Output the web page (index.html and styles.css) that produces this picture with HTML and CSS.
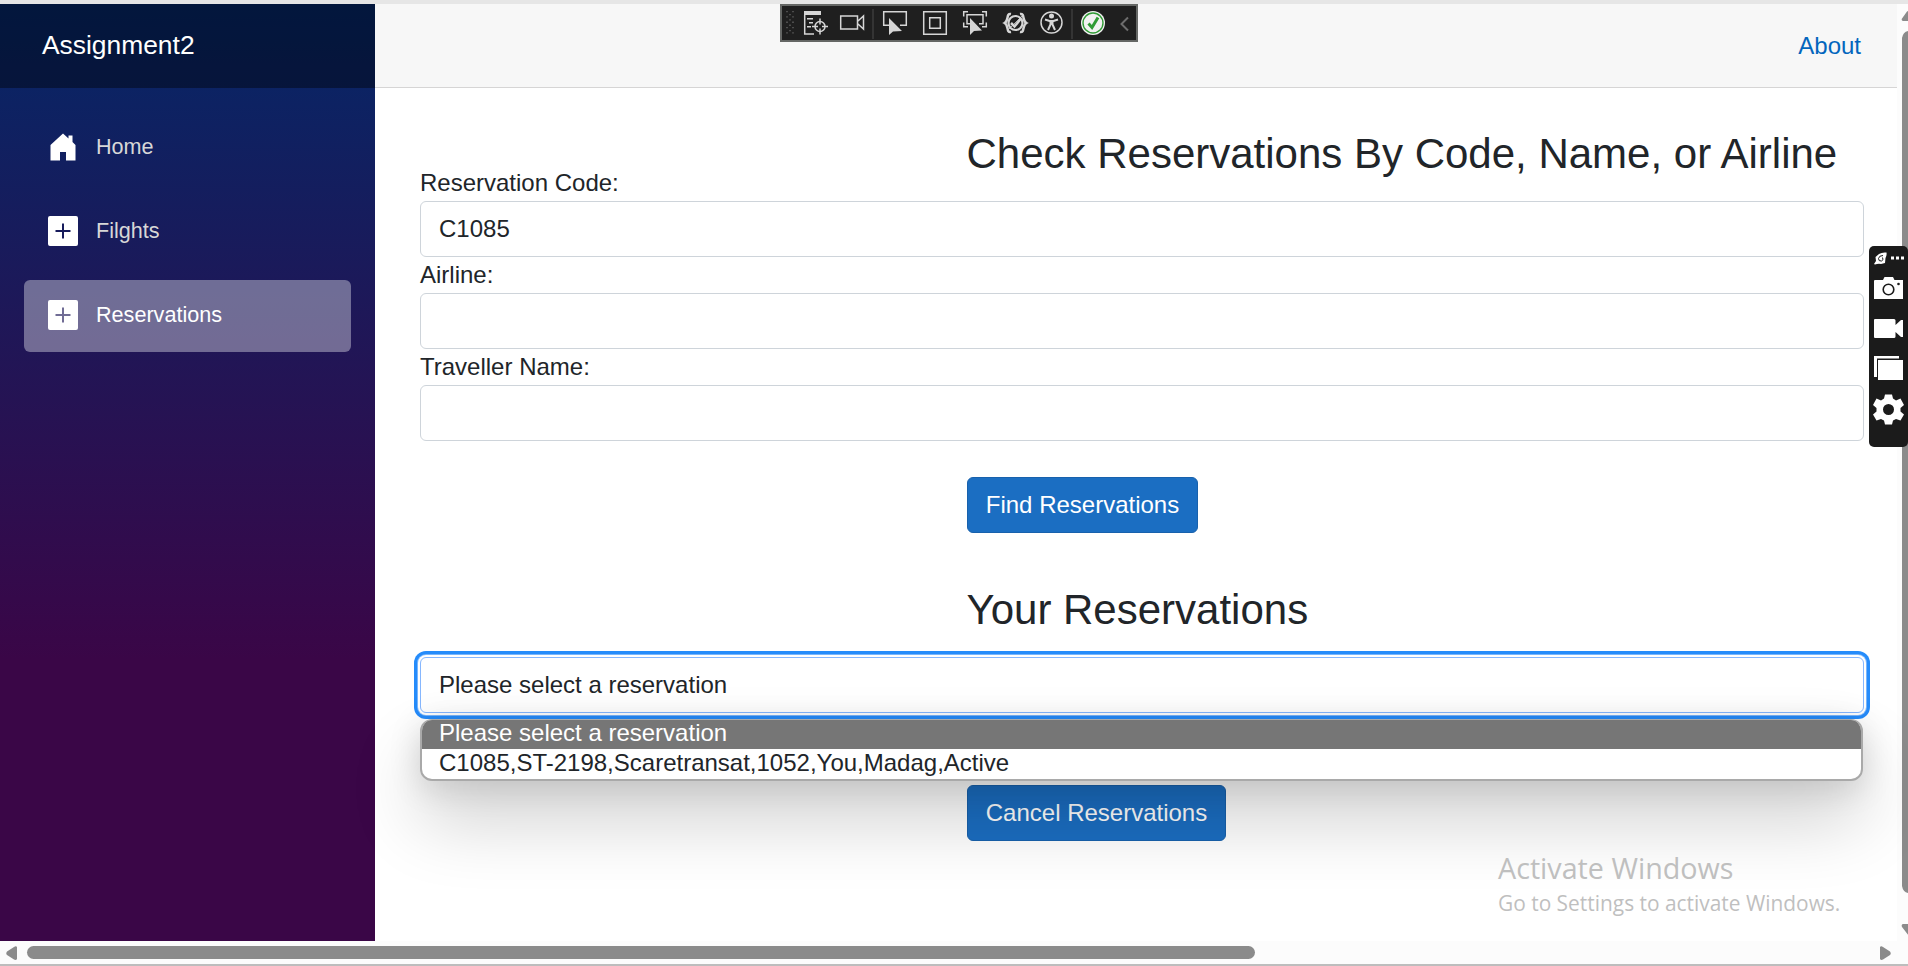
FILE: index.html
```html
<!DOCTYPE html>
<html lang="en">
<head>
<meta charset="utf-8">
<title>Assignment2</title>
<link rel="stylesheet" href="styles.css">
</head>
<body>
<div class="window-edge"></div>
<div class="viewport">
  <aside class="sidebar">
    <div class="brand">Assignment2</div>
    <nav class="nav">
      <a class="nav-link"><svg class="nav-icon" viewBox="0 0 30 30"><path d="M15 1.500 2.500 13V28.500H12V20H18V28.500H27.500V13L24.500 10V3.500H20.500V6.500z"/></svg>Home</a>
      <a class="nav-link"><svg class="nav-icon" viewBox="0 0 30 30"><path fill-rule="evenodd" d="M2 0H28Q30 0 30 2V28Q30 30 28 30H2Q0 30 0 28V2Q0 0 2 0zM14 7.500V14H7.500V16H14V22.500H16V16H22.500V14H16V7.500z"/></svg>Filghts</a>
      <a class="nav-link active"><svg class="nav-icon" viewBox="0 0 30 30"><path fill-rule="evenodd" d="M2 0H28Q30 0 30 2V28Q30 30 28 30H2Q0 30 0 28V2Q0 0 2 0zM14 7.500V14H7.500V16H14V22.500H16V16H22.500V14H16V7.500z"/></svg>Reservations</a>
    </nav>
  </aside>
  <main class="main">
    <header class="top-row"><a class="about">About</a></header>
    <article class="content">
      <h3 class="title">Check Reservations By Code, Name, or Airline</h3>
      <div class="form">
        <label class="label">Reservation Code:</label>
        <div class="control">C1085</div>
        <label class="label">Airline:</label>
        <div class="control"></div>
        <label class="label">Traveller Name:</label>
        <div class="control"></div>
      </div>
      <button class="btn find">Find Reservations</button>
      <h3 class="title second">Your Reservations</h3>
      <div class="select-wrap">
        <div class="control focused">Please select a reservation</div>
        <div class="options">
          <div class="option selected">Please select a reservation</div>
          <div class="option">C1085,ST-2198,Scaretransat,1052,You,Madag,Active</div>
        </div>
      </div>
      <button class="btn cancel">Cancel Reservations</button>
    </article>
  </main>
  <div class="vscroll">
    <svg width="11" height="937" viewBox="0 0 11 937" fill="#8b8b8b"><path d="M6 17Q4 16.500 5 14.500L10 7.500Q11 6.500 12 7V17zM5 34Q6 28 11 27V889Q6 888 5 882zM6 920H12V932L5 923Q4 920.500 6 920z"/></svg>
  </div>
</div>
<div class="hscroll">
  <svg width="17" height="14"><path d="M17 1V13Q16 14.500 14 13.500L7 9Q5.500 7.500 7 5.500L14 1Q16-.5 17 1z"/></svg>
  <div class="thumb"></div>
  <svg width="11" height="14"><path d="M0 1V13Q1 14.500 3 13.500L10 9Q11.500 7.500 10 5.500L3 1Q1-.5 0 1z"/></svg>
</div>

<div class="debug-bar">
  <svg width="354" height="34" viewBox="0 0 354 34" fill="none" stroke="#d6d6d6" stroke-width="1.500">
    <path stroke="#5d5d5d" stroke-dasharray="1.300 4" d="M5 5V31M11 5V31M8 8V29"/>
    <path d="M22 7H39" stroke-width="4"/><path d="M22.700 9V28H32M25 12.700H31M27 16.700H31M25 20.700H29"/>
    <circle cx="38" cy="20.500" r="5"/><path d="M38 12.500V18.500M38 22.500V28.500M30 20.500H36M40 20.500H46"/>
    <path d="M58.700 10H75.500V23H58.700zM76 15 81.500 10V23L76 18"/>
    <path stroke="#3d3d3d" d="M91 3V33M290 3V33"/>
    <path d="M107 19.300H101.700V5.700H124.300V19.300H118"/>
    <path fill="#d6d6d6" stroke="none" d="M107 12V29L111 25.500 120 25z"/>
    <path d="M141.700 5.700H164.300V28.300H141.700zM147.700 11.700H158.300V22.300H147.700z"/>
    <path d="M181.700 10.500V5.700H186M200 5.700H204.300V10.500M204.300 16.500V20.700H200M186 20.700H181.700V16.500M188 17.700H185V8.700H201V17.700H197"/>
    <path fill="#d6d6d6" stroke="none" d="M188 12V29L192 25 200 24.500z"/>
    <path d="M229 8C224 7 227 14.500 222.700 17 227 19.500 224 27 229 26M238 8C243 7 240 14.500 244.300 17 240 19.500 243 27 238 26" stroke-width="2.500"/>
    <circle cx="233.500" cy="17" r="7" stroke-width="2.200"/><path d="M229 17 232.500 20.500 239 12.500" stroke-width="2.500"/><path d="M227 23 240 10" stroke-width=".8"/>
    <circle cx="269.500" cy="16.500" r="10.500"/><circle cx="269.500" cy="10" r="2.500" fill="#d6d6d6" stroke="none"/><path d="M263 13.500 267.500 15H271.500L276 13.500M268.500 14.500V18.500L266 24M270.500 14.500V18.500L273 24M268 17.500H271" stroke-width="2"/>
    <circle cx="311" cy="17" r="12" fill="#f2f2f2" stroke="none"/><circle cx="311" cy="17" r="10" stroke="#309b35" stroke-width="1.400"/><path d="M306.500 17.500 310 21.500 316 11.500" stroke="#309b35" stroke-width="3"/>
    <path stroke="#6c6c6c" stroke-width="2" d="M346 11.500 339.500 18 346 24.500"/>
  </svg>
</div>

<div class="capture-bar">
  <svg width="39" height="201" viewBox="0 0 39 201" fill="#fff">
    <path d="M17.500 6.500Q18 9 16.500 12L16 17 12 18Q9 17.500 6 18.500L5 18 7 15 6.500 11 10 8Q13 6 17.500 6.500z"/><path d="M14 9.500Q10 9.500 9.500 12.500 9.500 15.500 12.500 15 15 14 13.500 11.500" fill="none" stroke="#1b1b1b" stroke-width="1"/>
    <path d="M22 10.500H25V13.500H22zM27 10.500H30V13.500H27zM32 10.500H35V13.500H32z"/>
    <path d="M5 35Q5 34 6 34H14L15.500 31H24L25.500 34H34V53H5z"/><circle cx="19.500" cy="43.500" r="5.300" stroke="#1b1b1b" stroke-width="1.600"/><circle cx="29.500" cy="38" r="1.300" fill="#1b1b1b"/>
    <path d="M6 73H25Q26.500 73 26.500 74.500V79L32 74H34V91H32L26.500 86V90.500Q26.500 92 25 92H6Q5 92 5 91V74Q5 73 6 73z"/>
    <path d="M5 110H30V112.500H8V131H5zM9 114H34V134H9z"/>
    <path transform="translate(0 -1.500)" fill-rule="evenodd" d="M16 150H23L24 154 27 156 31.500 154 35 160.500 31.500 163.500V167L35 170 31.500 176 27 174.500 24 176 23 180H16L15 176 12 174.500 7.500 176 4 170 7.500 167V163.500L4 160.500 7.500 154 12 156 15 154zM19.500 159.500A5.500 5.500 0 1 0 19.500 170.500 5.500 5.500 0 1 0 19.500 159.500z"/>
  </svg>
</div>

<div class="watermark"><div class="wm-title">Activate Windows</div><div class="wm-text">Go to Settings to activate Windows.</div></div>
</body>
</html>
```
FILE: styles.css
```css
* { box-sizing: border-box; }
body {
  margin: 0;
  width: 1908px;
  height: 966px;
  overflow: hidden;
  position: relative;
  font-family: "Liberation Sans", Arial, sans-serif;
  font-size: 24px;
  line-height: 36px;
  color: #212529;
  background: #fff;
}
.window-edge { height: 4px; background: #e6e6e6; }
.viewport { display: flex; height: 937px; }
.sidebar {
  width: 375px;
  flex: none;
  background: linear-gradient(180deg, #052767 0%, #3a0647 70%);
}
.brand {
  height: 84px;
  padding: 0 0 0 42px;
  line-height: 82px;
  font-size: 26.4px;
  color: #fff;
  background: rgba(0, 0, 0, .4);
}
.nav { display: flex; flex-direction: column; gap: 12px; padding: 24px; }
.nav-link {
  display: flex;
  align-items: center;
  gap: 18px;
  height: 72px;
  padding: 0 0 2px 24px;
  border-radius: 6px;
  font-size: 21.6px;
  color: #d7d7d7;
}
.nav-link.active { background: rgba(255, 255, 255, .37); color: #fff; }
.nav-icon { width: 30px; height: 30px; fill: #fff; }
.main { flex: 1; min-width: 0; }
.top-row {
  display: flex;
  justify-content: flex-end;
  align-items: center;
  height: 84px;
  padding-right: 36px;
  background: #f7f7f7;
  border-bottom: 1px solid #d6d5d5;
}
.about { color: #0366bd; }
.content { padding: 41px 33px 0 45px; }
.title {
  margin: 0 0 -15px 546.5px;
  height: 51px;
  font-size: 42px;
  line-height: 50.4px;
  font-weight: 500;
  white-space: nowrap;
}
.label { display: block; height: 36px; }
.control {
  height: 56px;
  padding: 9px 18px;
  border: 1px solid #ced4da;
  border-radius: 6px;
  background: #fff;
}
.btn {
  display: block;
  height: 56px;
  margin-left: 547px;
  padding: 0;
  border: 1px solid #1861ac;
  border-radius: 6px;
  background: #1b6ec2;
  color: #fff;
  font: 24px/36px "Liberation Sans", Arial, sans-serif;
}
.find { width: 231px; margin-top: 36px; }
.second { margin-top: 52px; margin-bottom: 21px; }
.select-wrap { position: relative; z-index: 1; }
.control.focused {
  border-color: #86b7fe;
  box-shadow: 0 0 0 2px #fff, 0 0 0 3px #79b6fc, 0 0 0 6px #258cfb;
}
.options {
  position: absolute;
  left: 0;
  right: 1px;
  top: 62px;
  border: 2px solid #a9a9a9;
  border-top-width: 1px;
  border-radius: 12px;
  overflow: hidden;
  background: #fff;
  box-shadow: 0 38px 72px rgba(0, 0, 0, .2), 0 6px 32px rgba(0, 0, 0, .15);
}
.option { height: 30px; line-height: 28px; padding-left: 17px; }
.option.selected { height: 29px; line-height: 26px; color: #fff; background: #767676; }
.cancel { width: 259px; margin-top: 72px; }
.vscroll { width: 11px; flex: none; background: #fcfcfc; }
.vscroll svg { display: block; }
.hscroll {
  display: flex;
  height: 25px;
  padding-top: 5px;
  background: #fcfcfc;
  border-bottom: 2px solid #bdbdbd;
  fill: #8b8b8b;
}
.thumb { width: 1228px; height: 13px; margin: 0 625px 0 10px; border-radius: 7px; background: #8b8b8b; }
.debug-bar {
  position: absolute;
  left: 780px;
  top: 4px;
  width: 358px;
  height: 38px;
  border: 2px solid #656765;
  background: #1f1f1f;
  z-index: 3;
}
.debug-bar svg, .capture-bar svg { display: block; }
.capture-bar {
  position: absolute;
  left: 1869px;
  top: 246px;
  width: 39px;
  height: 201px;
  border-radius: 5px;
  background: #1b1b1b;
  z-index: 3;
}
.watermark {
  position: absolute;
  left: 1498px;
  top: 848px;
  color: #bfbfbf;
  font-family: "Open Sans", "Noto Sans", sans-serif;
  white-space: nowrap;
  z-index: 3;
}
.wm-title { font-size: 28.7px; line-height: 40px; }
.wm-text { font-size: 20.9px; line-height: 31px; }
```
